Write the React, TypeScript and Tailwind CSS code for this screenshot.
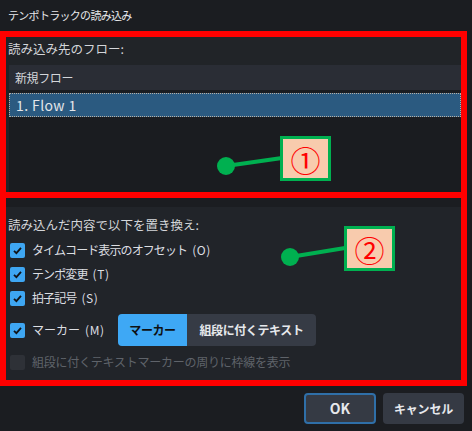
import React from "react";

const font = {
	fontFamily: '"Noto Sans CJK JP", "Noto Sans", sans-serif'
};

function Check({ checked = true, disabled = false }: { checked?: boolean; disabled?: boolean }) {
	if (disabled) {
		return <div className="w-[15px] h-[15px] rounded-[2px] bg-[#2e3137] shrink-0"></div>;
	}
	return (
		<div className="w-[15px] h-[15px] rounded-[2px] bg-[#3ea6f2] shrink-0 flex items-center justify-center">
			{checked && (
				<svg width="11" height="11" viewBox="0 0 11 11">
					<polyline
						points="2,5.8 4.4,8.2 9,2.8"
						fill="none"
						stroke="#111418"
						strokeWidth="1.8"
					/>
				</svg>
			)}
		</div>
	);
}

function Row({ label, keyName }: { label: string; keyName: string }) {
	return (
		<div className="h-[24px] flex items-center pl-[4px] gap-[7px]">
			<Check />
			<span className="text-[12px] text-[#dcdee2] tracking-[-0.9px]">
				{label}
				<span className="ml-[5px] tracking-[0.6px]">({keyName})</span>
			</span>
		</div>
	);
}

function Tag({ n }: { n: string }) {
	return (
		<div className="absolute w-[51px] h-[45px] border-[3px] border-[#00b050] bg-[#f8cbad] flex items-center justify-center text-[#ff0000] text-[30px] leading-none">
			{n}
		</div>
	);
}

export default function App() {
	return (
		<div
			className="w-[472px] h-[431px] bg-[#1b1d21] relative overflow-hidden text-[#dcdee2]"
			style={font}
		>
			{/* title */}
			<div className="h-[30px] flex items-center pl-[8px] text-[11px] text-[#e6e7ea] tracking-[-0.7px]">
				テンポトラックの読み込み
			</div>

			{/* section 1 */}
			<div className="mt-[1px] w-[467px] h-[167px] border-[6px] border-[#ff0000] bg-[#212428] flex flex-col overflow-hidden">
				<div className="h-[22px] flex items-center pl-[2px] text-[12.5px] text-[#d4d6da] mt-[1px]">
					読み込み先のフロー:
				</div>
				<div className="ml-[3px] mt-[5px] flex-1 bg-[#1a1c20] flex flex-col">
					<div className="h-[25px] bg-[#2a2d35] flex items-center pl-[6px] text-[12px] text-[#d4d6da] tracking-[-0.4px]">
						新規フロー
					</div>
					<div className="h-[24px] mt-[3px] bg-[#2b5a80] border border-dotted border-[#b8b0a4] flex items-center pl-[6px] text-[14px] text-[#e4e6ea] tracking-[0.4px]">
						1. Flow 1
					</div>
				</div>
			</div>

			{/* section 2 */}
			<div className="w-[467px] h-[188px] border-[6px] border-t-0 border-[#ff0000] bg-[#1b1d21] flex flex-col">
				<div className="mt-[9px] flex-1 bg-[#212429] flex flex-col">
					<div className="h-[18px] mt-[9px] flex items-center pl-[2px] text-[12.5px] text-[#d4d6da]">
						読み込んだ内容で以下を置き換え:
					</div>
					<div className="mt-[4px]">
						<Row label="タイムコード表示のオフセット" keyName="O" />
						<Row label="テンポ変更" keyName="T" />
						<Row label="拍子記号" keyName="S" />
					</div>
					<div className="mt-[4px] h-[32px] flex items-center">
						<div className="w-[112px] flex items-center pl-[4px] gap-[7px]">
							<Check />
							<span className="text-[12px] text-[#dcdee2] tracking-[0px]">
								マーカー
								<span className="ml-[5px] tracking-[0.6px]">(M)</span>
							</span>
						</div>
						<div className="flex h-[32px] rounded-[4px] overflow-hidden">
							<div className="w-[69px] bg-[#3ea8f5] flex items-center justify-center text-[12px] font-bold text-[#0e1114] tracking-[-0.4px]">
								マーカー
							</div>
							<div className="w-[129px] bg-[#363b45] flex items-center justify-center text-[12px] font-bold text-[#e6e8ec] tracking-[-0.4px]">
								組段に付くテキスト
							</div>
						</div>
					</div>
					<div className="mt-[4px] h-[24px] flex items-center pl-[4px] gap-[7px]">
						<Check disabled />
						<span className="text-[12px] text-[#5f636a] tracking-[-0.25px]">
							組段に付くテキストマーカーの周りに枠線を表示
						</span>
					</div>
				</div>
			</div>

			{/* footer buttons */}
			<div className="flex justify-end gap-[7px] pr-[8px] pt-[7px]">
				<button className="w-[72px] h-[31px] rounded-[4px] bg-[#353a44] border-2 border-[#2f6fa8] text-[14px] font-bold text-[#e6e8ec]">
					OK
				</button>
				<button className="w-[81px] h-[31px] rounded-[4px] bg-[#353a44] text-[12px] font-bold text-[#e6e8ec] tracking-[-0.2px]">
					キャンセル
				</button>
			</div>

			{/* annotations */}
			<svg className="absolute left-0 top-0" width="472" height="431">
				<line x1="226" y1="166" x2="282" y2="158" stroke="#00b050" strokeWidth="4" />
				<circle cx="226" cy="166" r="9" fill="#00b050" />
				<line x1="290" y1="257" x2="345" y2="248" stroke="#00b050" strokeWidth="4" />
				<circle cx="290" cy="257" r="9" fill="#00b050" />
			</svg>
			<div className="absolute left-[280px] top-[136px]">
				<Tag n="①" />
			</div>
			<div className="absolute left-[344px] top-[226px]">
				<Tag n="②" />
			</div>
		</div>
	);
}
